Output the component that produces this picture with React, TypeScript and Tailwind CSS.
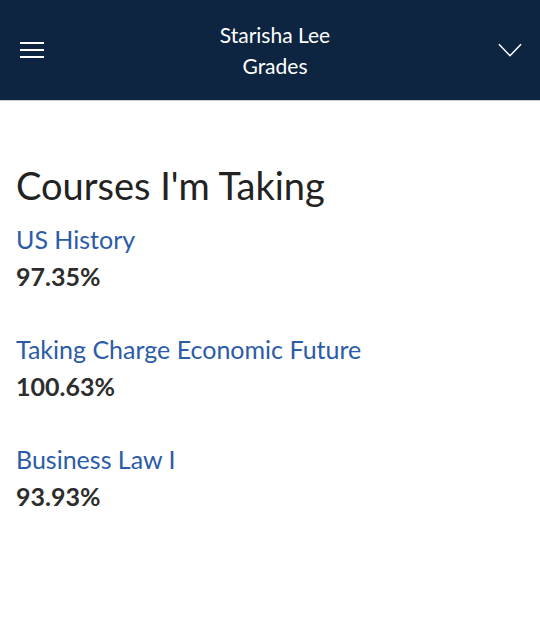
import React from 'react';

const courses = [
    { name: 'US History', grade: '97.35%' },
    { name: 'Taking Charge Economic Future', grade: '100.63%' },
    { name: 'Business Law I', grade: '93.93%' },
];

const App: React.FC = () => {
    return (
        <div className="min-h-screen bg-white" style={{ fontFamily: 'Lato, "Open Sans", sans-serif' }}>
            <header className="h-[101px] bg-[#0d2540] border-b border-[#c7cdd1] flex items-center justify-between px-[20px]">
                <button className="w-[24px] h-[24px] flex flex-col justify-center gap-[5.5px]">
                    <span className="block h-[1.5px] w-[24px] bg-white" />
                    <span className="block h-[1.5px] w-[24px] bg-white" />
                    <span className="block h-[1.5px] w-[24px] bg-white" />
                </button>
                <div className="text-white text-center text-[21px] leading-[31px] ml-[8px]">
                    <div>Starisha Lee</div>
                    <div>Grades</div>
                </div>
                <button className="w-[24px] h-[24px] flex items-center justify-center -mr-[2px]">
                    <svg width="25" height="16" viewBox="0 0 25 16" fill="none" stroke="white" strokeWidth="1.6">
                        <path d="M1 2l11.5 12L24 2" />
                    </svg>
                </button>
            </header>

            <main className="px-[16px] pt-[61px]">
                <h1 className="text-[38px] leading-[46px] text-[#222] mb-[13px]">Courses I'm Taking</h1>
                <div className="flex flex-col gap-[36px]">
                    {courses.map((c) => (
                        <div key={c.name}>
                            <div className="text-[25px] leading-[37px] text-[#2b5ca8]">{c.name}</div>
                            <div className="text-[25px] leading-[37px] font-bold text-[#2d2d2d]">{c.grade}</div>
                        </div>
                    ))}
                </div>
            </main>
        </div>
    );
};

export default App;
